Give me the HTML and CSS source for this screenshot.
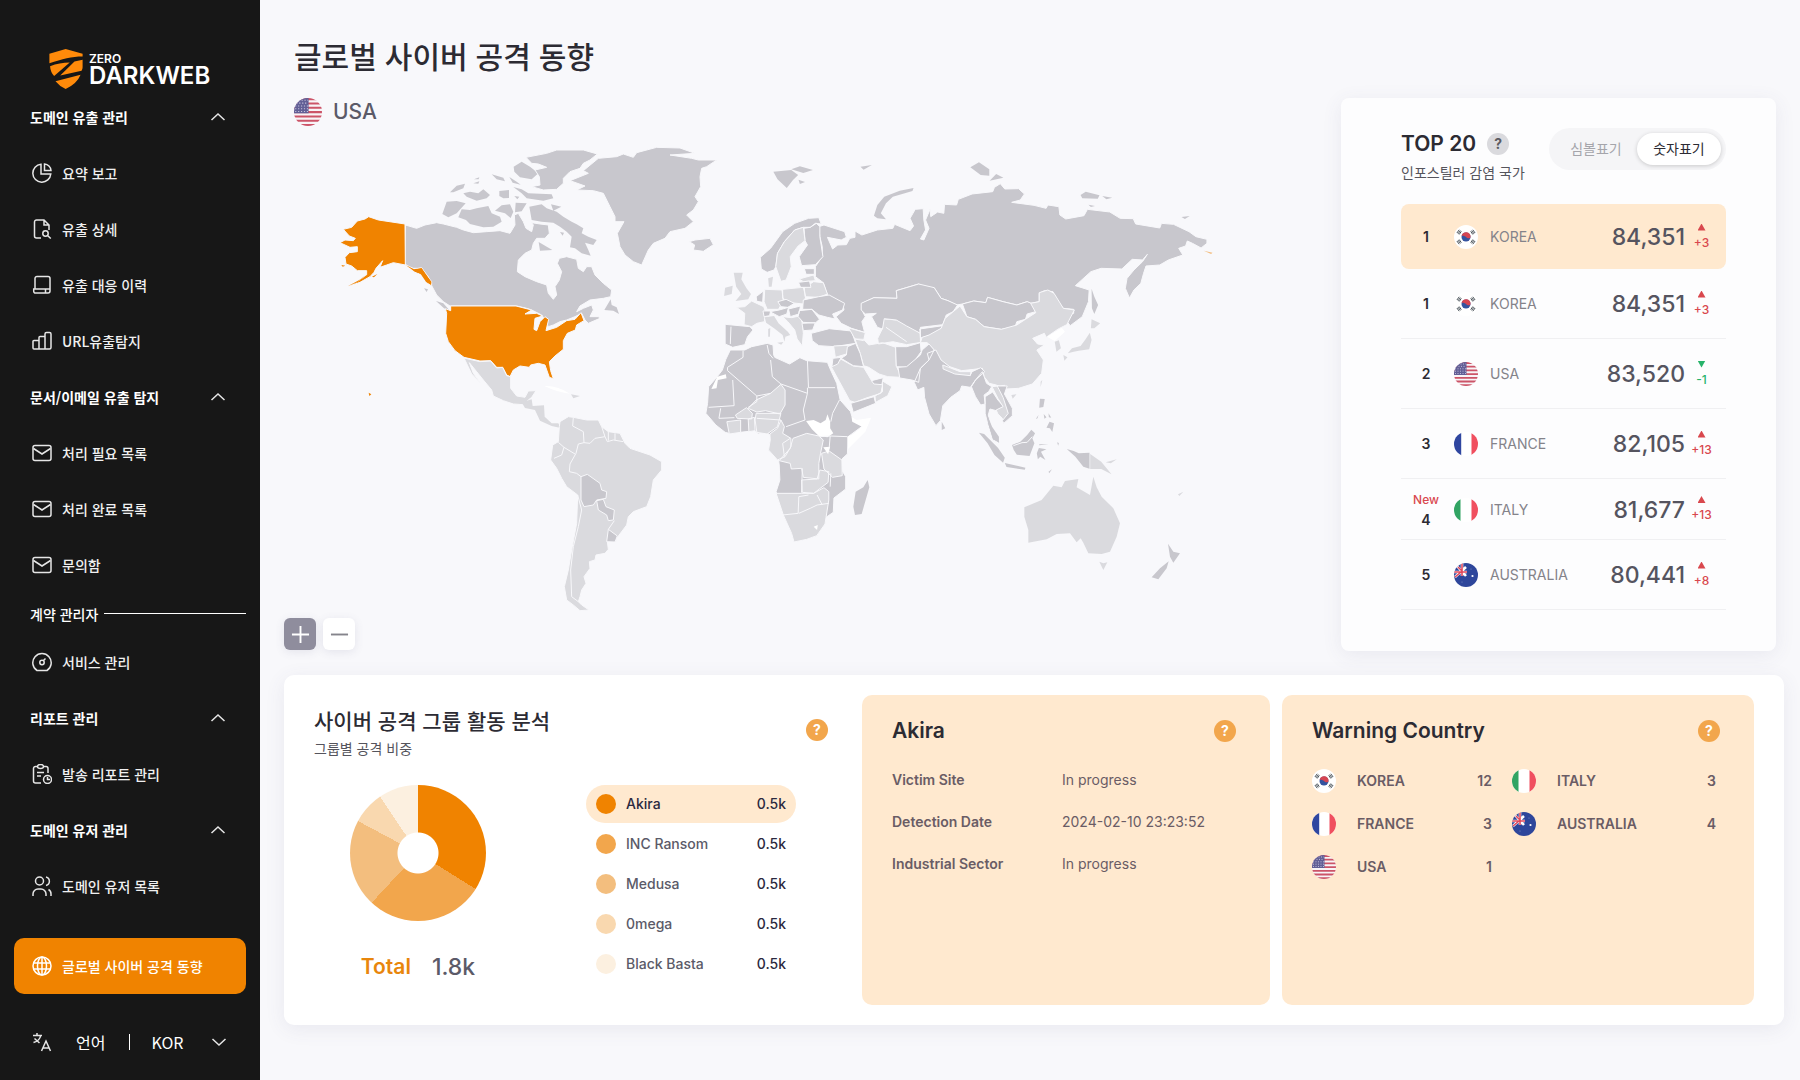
FILE: index.html
```html
<!DOCTYPE html>
<html lang="ko">
<head>
<meta charset="utf-8">
<meta name="viewport" content="width=device-width, initial-scale=1">
<title>글로벌 사이버 공격 동향</title>
<link rel="stylesheet" href="styles.css">
</head>
<body>
<svg class="defs" aria-hidden="true">
  <defs>
    <clipPath id="round"><circle cx="12" cy="12" r="12"/></clipPath>
    <symbol id="up" viewBox="0 0 20 20"><path d="M3.500 13 10 7l6.500 6"/></symbol>
    <symbol id="down" viewBox="0 0 20 20"><path d="M3.500 7 10 13l6.500-6"/></symbol>
    <symbol id="mail" viewBox="0 0 20 20"><rect x="1" y="2.500" width="18" height="15" rx="2"/><path d="M1.500 5.500 10 11l8.500-5.500"/></symbol>
    <symbol id="kr" viewBox="0 0 24 24"><g clip-path="url(#round)"><path fill="#fff" d="M0 0h24v24H0z"/><circle cx="12" cy="12" r="4.500" fill="#34539f"/><path fill="#d64552" d="M7.600 11A4.500 4.500 0 0 1 16.500 12.400C15 14.200 13 13 12 12s-3-1.800-4.400-1z"/><path stroke="#4c555c" stroke-width="1" fill="none" d="M2.900 8 5.200 4.800M4 8.900 6.300 5.600M5.200 9.500 7.300 6.300M18.800 4.800 21.100 8M17.700 5.600 20 8.900M16.700 6.300 18.800 9.500M2.900 16 5.200 19.200M4 15.100 6.300 18.400M5.200 14.500 7.300 17.700M18.800 19.200 21.100 16M17.700 18.400 20 15.100M16.700 17.700 18.800 14.500"/></g></symbol>
    <symbol id="us" viewBox="0 0 24 24"><g clip-path="url(#round)"><path fill="#f8f4f7" d="M0 0h24v24H0z"/><path stroke="#cc5468" stroke-width="1.800" d="M0 1h24M0 4.700h24M0 8.400h24M0 12.100h24M0 15.800h24M0 19.500h24M0 23.200h24"/><path fill="#625f96" d="M0 0h12.500v13H0z"/><path stroke="#c6c3dc" stroke-width=".9" stroke-dasharray="1 1.500" d="M4 2h8M2 4.400h10M1 6.800h11M1 9.200h11M1 11.500h11"/></g></symbol>
    <symbol id="fr" viewBox="0 0 24 24"><g clip-path="url(#round)"><path fill="#fff" d="M0 0h24v24H0z"/><path fill="#2f46a0" d="M0 0h7.200v24H0z"/><path fill="#f04f5f" d="M17.500 0H24v24h-6.500z"/></g></symbol>
    <symbol id="it" viewBox="0 0 24 24"><g clip-path="url(#round)"><path fill="#fff" d="M0 0h24v24H0z"/><path fill="#31a463" d="M0 0h6.500v24H0z"/><path fill="#f04f5f" d="M17.500 0H24v24h-6.500z"/></g></symbol>
    <symbol id="au" viewBox="0 0 24 24"><g clip-path="url(#round)"><path fill="#2e469b" d="M0 0h24v24H0z"/><path stroke="#fff" stroke-width="2.600" d="m2 2 10 11M1 14 12 4M0 9h13M8 0v13"/><path stroke="#e0495d" stroke-width="1.600" d="M0 9h13M8 0v13M1 14l6-5M4 4l4 4"/><circle cx="18.500" cy="13" r="1.100" fill="#fff"/><circle cx="17" cy="6" r=".5" fill="#8d9bcb"/><circle cx="8" cy="19" r=".5" fill="#8d9bcb"/></g></symbol>
  </defs>
</svg>
<div class="app">
  <aside class="side">
    <a class="logo" href="#">
      <svg class="logo-mark" viewBox="0 0 98 118" aria-hidden="true"><path fill="#ff8a0a" d="M0 14 48 0 98 14V22C66 22 38 30 0 42ZM2 51Q30 40 60 40L14 80Q3 68 2 51ZM74 37 98 32V54Q98 60 95 64L32 78ZM18 95 92 76Q82 102 48 118 30 110 18 95Z"/></svg>
      <span class="logo-text"><span class="logo-small">ZERO</span><span class="logo-big">DARKWEB</span></span>
    </a>
    <nav class="nav">
      <button class="group" type="button">도메인 유출 관리<svg><use href="#up"/></svg></button>
      <a class="item" href="#"><svg viewBox="0 0 20 20"><path d="M9 1.200A9 9 0 1 0 18.800 11H9zM12.500 1v6.500H19A7 7 0 0 0 12.500 1z"/></svg>요약 보고</a>
      <a class="item" href="#"><svg viewBox="0 0 20 20"><path d="M9 19H4.500a2 2 0 0 1-2-2V3a2 2 0 0 1 2-2H12l5 5v5M12 1v5h5"/><circle cx="13.500" cy="14.500" r="2.700"/><path d="m15.500 16.500 3.300 3"/></svg>유출 상세</a>
      <a class="item" href="#"><svg viewBox="0 0 20 20"><path d="M3 14V3.500a2 2 0 0 1 2-2h11a2 2 0 0 1 2 2V16a2 2 0 0 1-2 2H3.500A1.800 1.800 0 0 1 1.700 16v-2H18M13.500 14v4"/></svg>유출 대응 이력</a>
      <a class="item" href="#"><svg viewBox="0 0 20 20"><path d="M1 10.500a1 1 0 0 1 1-1h5V18H2a1 1 0 0 1-1-1zM7 6.500a1 1 0 0 1 1-1h5V18H7zM13 3a1.500 1.500 0 0 1 1.500-1.500h3A1.500 1.500 0 0 1 19 3v13.500a1.500 1.500 0 0 1-1.500 1.500H13z"/></svg>URL유출탐지</a>
      <button class="group" type="button">문서/이메일 유출 탐지<svg><use href="#up"/></svg></button>
      <a class="item" href="#"><svg><use href="#mail"/></svg>처리 필요 목록</a>
      <a class="item" href="#"><svg><use href="#mail"/></svg>처리 완료 목록</a>
      <a class="item" href="#"><svg><use href="#mail"/></svg>문의함</a>
      <div class="divider">계약 관리자</div>
      <a class="item" href="#"><svg viewBox="0 0 20 20"><path d="M5 18.500A9.200 9.200 0 1 1 15 18.500zM11.500 8.500 13.500 6.500"/><circle cx="10" cy="10.500" r="2.200"/></svg>서비스 관리</a>
      <button class="group" type="button">리포트 관리<svg><use href="#up"/></svg></button>
      <a class="item" href="#"><svg viewBox="0 0 20 20"><path d="M9 19H3.500a2 2 0 0 1-2-2V4.500a2 2 0 0 1 2-2H5M12 2.500h2a2 2 0 0 1 2 2V9M5.500 2.500C5.500 1 7 .5 8.500.5s3 .5 3 2-1 2-3 2-3-.5-3-2zM5 8.500h7M5 12h4"/><circle cx="15.500" cy="15.500" r="4"/><path d="M15.500 13v2.500H18"/></svg>발송 리포트 관리</a>
      <button class="group" type="button">도메인 유저 관리<svg><use href="#up"/></svg></button>
      <a class="item" href="#"><svg viewBox="0 0 20 20"><circle cx="7.500" cy="5" r="4"/><path d="M1 20v-2a5 5 0 0 1 5-5h3a5 5 0 0 1 5 5v2M14 1c4.500 1 4.500 7.500 0 8.500M16.500 13.500A5 5 0 0 1 19 18v2"/></svg>도메인 유저 목록</a>
      <a class="item active" href="#" aria-current="page"><svg viewBox="0 0 20 20"><circle cx="10" cy="10" r="9"/><ellipse cx="10" cy="10" rx="4.500" ry="9"/><path d="M1.800 7h16.400M1.800 13h16.400M10 1v18"/></svg>글로벌 사이버 공격 동향</a>
    </nav>
    <div class="lang">
      <svg viewBox="0 0 20 20"><path d="M1 3.500h9M5 1v2.500M2.500 6.500 7.500 11M8.500 4C8 7.500 5 9.500 1.500 10.500M9.500 19 14 9l4.500 10M11 16h6"/></svg>
      <label for="lang">언어</label>
      <span class="lang-pick">
        <select id="lang"><option>KOR</option><option>ENG</option></select>
        <svg><use href="#down"/></svg>
      </span>
    </div>
  </aside>

  <main class="main">
    <h1>글로벌 사이버 공격 동향</h1>
    <div class="top">
      <section class="world">
        <h2 class="country"><svg><use href="#us"/></svg>USA</h2>
        <svg class="map" viewBox="284 126 1040 492" role="img" aria-label="세계 지도">
          <g transform="translate(270 20) scale(.33333)">
            <path class="dk" d="M406 615 440 625 465 615 500 608 520 612 560 622 580 630 610 638 650 635 690 632 720 640 735 615 733 585 745 580 760 605 768 625 785 635 790 615 785 608 810 612 835 615 838 640 825 655 800 655 790 670 785 690 765 700 745 720 742 755 765 770 800 785 830 795 835 820 850 838 860 825 855 800 868 780 875 755 862 730 868 715 890 710 920 718 925 745 940 755 950 740 965 740 975 765 1000 790 1025 810 1022 830 1000 835 960 840 930 858 920 875 940 865 965 855 970 870 960 890 985 890 990 895 955 910 945 900 935 880 915 890 890 900 870 905 850 915 835 920 828 905 815 885 785 870 770 865 740 858 540 858 520 845 500 825 485 797 475 770 455 745 430 745 406 735Z"/>
            <path class="dk isle" d="M1003 870 1022 838 1025 855 1040 862 1047 882 1030 872ZM498 843 520 850 541 874 522 865ZM530 545 560 543 587 550 560 580 535 592 517 582ZM565 592 575 568 600 570 620 565 655 558 665 580 690 590 695 605 670 620 640 622 600 612 588 600ZM580 520 600 515 625 520 640 508 660 525 650 535 620 542 590 530ZM540 517 560 497 585 491 580 505 550 517ZM610 490 628 484 625 491ZM612 478 628 472 626 478ZM665 463 700 473 705 484 680 478ZM718 471 740 485 752 494 728 488ZM688 513 717 510 717 534 700 535 688 528ZM730 501 755 508 775 520 845 523 850 535 820 542 770 535 755 520ZM733 528 748 530 742 538ZM731 440 755 425 780 440 805 460 785 478 750 472 733 455ZM695 556 720 553 730 575 722 594 705 580 675 572ZM737 548 770 550 755 574 735 577ZM778 560 815 553 830 565 860 575 880 590 905 605 920 613 940 625 935 640 955 650 980 660 970 675 945 668 955 690 962 707 935 700 915 685 900 682 905 650 890 635 870 620 850 608 815 605 785 600ZM843 553 874 560 850 572ZM806 666 847 690 810 692ZM870 636 882 638 878 647ZM462 805 474 808 470 816Z"/>
            <path class="dk" d="M768 412 830 400 860 390 940 390 982 402 960 420 940 430 930 445 900 455 880 475 880 490 860 508 820 510 785 500 810 495 808 470 795 450 830 442 805 432 785 430Z"/>
            <path class="dk" d="M900 482 955 460 940 452 985 415 1040 410 1060 402 1090 412 1100 398 1160 382 1230 384 1275 400 1200 405 1265 415 1285 420 1340 420 1310 440 1295 445 1290 470 1292 500 1275 530 1285 545 1270 570 1250 585 1270 605 1245 625 1200 635 1185 655 1150 670 1135 690 1115 735 1090 725 1065 705 1050 680 1042 640 1062 605 1035 605 1035 590 1020 560 1000 520 970 512 920 510 945 498ZM1258 665 1275 660 1320 655 1330 674 1300 694 1270 690 1274 675Z"/>
            <path class="us" d="M296 590 325 600 405 612 406 735 370 728 350 735 330 742 338 722 318 745 312 757 300 770 270 787 235 799 262 785 290 764 290 752 262 752 245 738 228 732 225 712 238 698 262 695 262 680 240 682 210 668 225 660 250 662 256 655 238 648 220 628 245 622 262 603 285 597ZM406 733 430 748 455 743 470 765 485 785 485 797 470 788 455 764 435 757Z"/>
            <path class="us isle" d="M306 770 322 762 312 772ZM214 735 226 737 218 740ZM290 764 262 787 233 799 268 780ZM408 736 432 748 455 745 484 786 483 794 468 785 452 762 433 754Z"/>
          </g>
          <g transform="translate(280 280) scale(.33333)">
            <path class="us" d="M512 78H708L755 90 735 102 770 100 788 108 765 115 762 148 770 152 780 125 795 110 806 118 798 152 830 142 860 122 885 118 903 98 912 122 890 135 886 150 862 160 850 182 850 208 825 228 808 245 812 272 820 296 808 292 795 255 775 250 752 255 748 262 720 258 700 270 690 290 680 285 668 262 650 262 632 242 600 243 552 232 525 212 505 185 497 160 500 100 496 86 512 92Z"/>
            <path class="us isle" d="M266 338 274 343 268 348Z"/>
            <path class="lt" d="M552 234 600 245 632 243 650 264 668 262 680 287 692 290 692 325 710 348 735 352 745 333 768 332 755 352 745 360 730 374 700 372 670 362 640 348 635 330 610 300 590 275 568 248 580 280 602 310 575 282Z"/>
            <path class="lt isle" d="M725 367 755 358 758 378 792 376 794 410 815 430 835 430 842 444 815 438 780 422 765 390 735 384ZM873 343 900 348 880 355Z"/>
            <path class="isle" fill="#fff" d="M793 318Q830 315 870 341 835 338 793 318Z"/>
            <path class="lt" d="M840 425 865 410 880 412 920 420 955 420 965 440 985 455 1020 460 1035 490 1050 505 1110 525 1145 545 1145 570 1120 600 1112 650 1100 680 1060 695 1045 710 1040 735 1010 775 1008 785 982 785 985 808 975 820 948 825 945 840 928 845 930 865 912 890 918 910 905 930 900 950 895 965 905 975 927 990 900 992 880 975 860 960 853 920 865 870 875 810 890 730 893 645 860 620 845 595 830 565 812 540 818 495 835 485 838 440Z"/>
            <path class="dk" d="M903 590 922 583 960 610 965 630 980 635 978 655 950 660 940 675 912 680 903 660ZM950 662 970 658 978 680 1003 690 1000 720 985 722 980 705 955 690ZM985 748 1012 768 1005 786 980 785Z"/>
            <path class="bd" d="M880 412 878 438 910 455 912 488 895 492 888 520M912 488 930 490 945 475 975 470 965 440M975 470 982 485 1000 480 1030 485M985 455 985 482M1005 460 1005 480M835 487 852 502 885 522M852 502 845 525 822 535M888 520 870 552 868 575 890 580 903 590M893 645 905 690 895 740 880 800 872 870 875 950 895 965M1003 722 985 748"/>
          </g>
          <g transform="translate(700 120) scale(.34439 .33333)">
            <path class="dk isle" d="M213 155 265 150 285 165 270 180 252 204 225 178ZM265 148 290 139 328 150 300 159ZM286 179 305 186 290 192ZM466 140 499 135 475 149ZM505 287 515 255 535 230 580 212 620 204 617 213 560 230 540 250 525 280 540 298 515 295ZM785 142 810 127 840 148 840 167 815 165ZM841 182 860 162 881 173ZM1105 225 1120 215 1160 226 1155 236 1110 235ZM1168 228 1197 233 1180 238ZM1128 254 1147 258 1135 261ZM1398 291 1422 288 1408 297Z"/>
            <path class="dk" d="M345 320 360 315 420 335 425 352 410 360 370 352 385 387 400 375 425 374 435 355 450 352 450 333 470 345 515 330 560 325 565 313 610 332 620 318 610 295 625 268 648 266 650 300 655 330 640 357 650 360 665 325 655 300 668 268 670 290 690 276 708 280 710 253 745 255 750 238 790 222 850 215 855 202 872 191 885 207 925 206 942 222 930 240 905 247 970 256 1005 265 1010 255 1042 260 1045 285 1062 297 1115 287 1125 268 1190 276 1220 295 1258 296 1265 312 1335 324 1340 310 1375 313 1420 335 1440 350 1472 358 1472 370 1455 384 1430 370 1415 363 1410 378 1390 385 1402 405 1360 420 1335 435 1295 438 1288 460 1280 490 1260 510 1247 534 1235 505 1240 475 1260 450 1285 425 1299 403 1285 420 1255 418 1225 447 1165 445 1135 455 1090 497 1130 510 1128 545 1110 590 1075 617 1062 600 1070 585 1085 580 1085 568 1055 565 1035 540 1025 515 1000 512 985 520 985 545 960 550 950 545 920 555 880 545 835 532 830 548 795 543 762 552 745 555 720 542 700 535 680 503 665 508 635 492 570 512 572 535 505 533 470 550 470 570 480 590 470 605 478 637 440 625 410 610 395 590 418 570 415 550 380 530 370 525 358 488 335 470 335 440 355 410 355 380 348 350Z"/>
            <path class="dk" d="M175 412 205 385 240 335 275 310 315 295 345 293 352 312 335 310 320 322 300 322 275 330 245 365 225 400 220 440 215 450 195 457 178 447ZM302 325 320 322 338 310 348 320 348 350 357 410 335 434 295 437 288 410 312 375 305 362Z"/>
            <path class="lt" d="M220 440 225 400 245 365 275 330 300 322 305 362 285 378 262 410 265 440 250 480 235 484ZM288 477 330 465 335 482 300 485ZM303 503 330 485 358 488 370 522 345 532 305 530ZM240 508 300 502 307 530 300 552 262 548 240 535ZM188 508 238 510 242 542 228 568 195 568 186 545ZM106 562 130 560 150 543 185 560 190 575 187 605 165 610 150 620 128 614 130 580ZM240 590 265 593 290 588 298 612 300 640 297 678 282 657 275 630 255 605Z"/>
            <path class="lt isle" d="M98 458 124 458 120 478 135 505 148 522 140 538 103 543 120 522 105 500ZM73 503 95 497 92 522 70 528ZM198 475 212 470 208 500 200 500ZM188 592 215 588 228 610 255 635 262 645 248 650 245 665 240 645 215 625 192 608ZM224 668 242 666 236 674ZM198 627 204 624 203 650 198 650Z"/>
            <path class="dk" d="M303 446 332 446 332 463 308 463ZM286 487 318 483 322 502 292 502ZM163 530 184 513 182 547 165 544ZM226 545 250 538 274 550 255 562 235 560ZM203 575 230 570 257 562 252 582 230 590ZM257 567 292 558 287 582 262 590ZM288 572 325 568 347 598 335 609 300 607 285 590ZM296 610 335 608 327 630 300 632ZM183 573 205 573 202 587 186 590ZM300 540 345 530 375 525 420 550 414 570 385 582 392 597 370 592 345 585 325 568 298 568ZM73 613 145 620 154 630 138 650 130 674 95 682 73 672ZM323 640 375 626 440 633 452 670 390 680 345 677 326 662Z"/>
            <path class="lt" d="M432 624 480 638 475 662 450 657ZM528 596 570 600 605 615 640 640 642 667 600 674 560 665 518 672 516 655 530 625ZM450 657 475 658 490 675 530 668 568 682 570 738 585 772 545 770 520 762 490 742 475 737 465 700ZM388 678 432 676 425 702 393 712ZM381 740 410 718 445 738 475 742 500 785 530 795 525 820 480 835 450 847 435 842 405 785ZM508 828 530 815 530 783 557 800 545 827 510 847Z"/>
            <path class="dk" d="M468 550 505 533 572 535 570 512 635 492 680 503 700 535 720 542 748 555 735 575 715 585 705 614 640 622 640 640 600 618 570 600 535 596 530 627 515 622 498 590 512 580 480 582 468 570ZM638 627 705 617 690 640 640 654ZM762 552 795 543 830 548 835 532 880 545 920 555 950 545 975 555 975 575 950 582 945 598 920 605 915 620 875 628 825 620 800 598 775 590ZM568 680 600 680 640 668 642 695 625 720 600 742 570 740ZM428 680 452 670 465 700 475 740 445 737 410 715 425 705ZM386 715 410 712 400 732 383 740ZM438 850 505 830 510 850 445 877ZM498 782 532 773 528 794 505 792Z"/>
            <path class="lt" d="M755 558 775 590 800 598 825 620 875 628 920 615 945 598 975 578 960 550 985 545 985 518 1010 510 1028 520 1055 565 1087 570 1065 614 1040 627 1005 652 1000 640 966 655 980 672 1000 675 978 690 997 720 992 760 965 792 925 805 890 807 860 795 840 790 825 770 820 745 795 748 760 752 710 735 690 712 680 690 660 668 640 668 645 652 665 645 700 625 712 595Z"/>
            <path class="lt isle" d="M1030 665 1042 661 1048 685 1035 695ZM1137 598 1162 610 1145 625 1135 625ZM1132 638 1137 660 1130 688 1100 692 1085 695 1068 700 1080 685 1105 678 1118 660ZM1055 705 1067 712 1058 722ZM904 825 919 823 908 836ZM989 785 994 780 989 801Z"/>
            <path class="isle" fill="#fff" d="M1008 650 1050 623 1060 635 1030 663Z"/>
            <path class="dk" d="M575 742 600 740 640 705 645 690 665 672 680 690 665 720 640 745 635 787 615 780 580 774ZM640 745 665 720 660 700 685 690 700 720 740 752 785 765 790 755 815 743 827 755 800 780 785 802 760 798 755 812 728 832 705 857 698 902 685 917 665 882 652 832 650 802 632 810 622 787ZM788 800 800 780 820 755 832 790 847 800 838 815 825 825 828 852 815 855 800 830ZM828 830 850 816 865 840 882 860 860 872 842 867 837 885 847 920 870 968 850 960 835 910 828 880Z"/>
            <path class="dk isle" d="M702 905 712 925 702 930ZM834 885 848 920 868 950 868 968 850 956 838 915ZM1137 506 1145 530 1156 555 1145 582 1138 565ZM987 836 1001 837 997 861 985 863ZM1015 905 1028 910 1023 936 1016 925 1006 923ZM998 882 1006 892 1000 896ZM1012 880 1020 893 1013 892ZM975 897 983 885 980 895ZM810 938 825 942 865 983 885 1013 880 1028 855 1005 835 970ZM885 1029 945 1043 943 1049 890 1041ZM906 975 930 965 950 945 962 929 973 940 965 955 971 970 957 1008 920 1004 911 990ZM978 1000 984 984 1006 988 990 995 1003 1020 988 1010 981 1018ZM1065 987 1085 993 1100 1000 1131 998 1131 1046 1113 1040 1090 1010ZM1037 967 1042 969 1040 977ZM985 973 1012 973 985 976ZM1012 1055 1022 1048 1014 1060Z"/>
            <path class="bd" d="M910 977 935 968 950 967 965 950"/>
            <path class="lt" d="M705 735 755 755 787 755 785 767 740 762 706 747ZM848 800 885 796 880 825 905 870 905 890 882 910 878 895 865 882 860 870 880 860 865 835Z"/>
            <path class="lt isle" d="M1133 1002 1165 1025 1195 1063 1165 1047 1133 1047ZM1178 1027 1210 1018 1193 1030Z"/>
            <path class="dk" d="M863 798 892 798 884 822 907 865 907 887 882 910 878 902 895 880 880 832Z"/>
            <path class="dk" d="M88 690 130 690 150 680 195 670 212 675 214 705 217 712 260 732 290 713 310 722 370 727 377 745 397 790 407 840 437 875 442 892 472 918 430 950 428 1002 412 1017 412 1050 423 1070 423 1107 389 1134 387 1177 366 1192 363 1210 339 1247 310 1258 273 1266 266 1240 242 1185 221 1115 232 1080 230 1035 228 1020 199 990 204 960 203 944 189 937 169 942 160 932 116 937 92 942 73 937 46 915 17 880 22 850 25 800 50 770 65 750 75 718Z"/>
            <path class="lt" d="M163 840 205 820 235 793 247 810 247 855 232 882 190 872 165 876 140 865ZM163 880 235 880 225 920 195 942 165 937 160 900ZM78 905 118 900 118 937 85 942ZM103 885 135 863 152 880 150 897 108 895ZM140 897 158 892 160 932 142 935ZM235 900 245 920 240 940 264 955 264 980 247 1010 225 1020 199 990 204 960 203 942 225 925ZM270 955 310 940 345 948 358 960 350 1000 345 1030 345 1077 300 1072 295 1045 265 1047 262 1030 230 1022 262 985ZM353 1000 375 993 412 1020 413 1067 385 1072 360 1047ZM295 1080 340 1077 348 1050 374 1055 372 1087 330 1120 297 1117ZM221 1120 295 1120 330 1120 360 1103 374 1115 374 1140 366 1192 363 1212 339 1247 310 1258 273 1266 266 1240 242 1185Z"/>
            <path class="isle" fill="#fff" d="M308 903 330 900 350 910 365 900 370 883 378 905 378 925 387 940 370 952 345 948 325 928ZM440 890 455 900 497 893 480 935 430 987 428 950 445 942 470 920 442 905ZM33 807 50 770 75 763 77 775 52 780 48 805ZM358 982 378 980 372 1003ZM330 1220 342 1215 340 1230Z"/>
            <path class="bd" d="M125 692V712L80 742 80 752 165 828 205 820M95 780 99 857 25 862M165 828 165 845 140 862M205 720 210 770 235 792 312 820M312 722 315 803 392 803M312 803V820L300 870 305 900 250 920M405 840 385 880 380 905M378 948 428 950M195 675 200 700 212 715M55 895 100 893M60 865 55 895M348 950 378 948 375 985M90 620 88 672M540 622 600 665M262 955 240 970 245 1010M297 1045 295 1118M315 1125 287 1130 285 1180 240 1185M287 1180 320 1165 340 1155 374 1150M340 1125 355 1155M235 900 165 895M640 640 640 665M380 1060 378 1100"/>
            <path class="us isle" d="M1463 392 1488 398 1484 402Z" opacity=".5"/>
          </g>
          <g transform="translate(690 400) scale(.33333)">
            <path class="dk isle" d="M533 240 538 262 515 342 495 345 490 320 497 275 520 262ZM1434 431 1450 455 1470 460 1450 488 1440 470ZM1436 484 1430 505 1405 538 1385 532 1410 505Z"/>
            <path class="lt isle" d="M1003 322 1055 300 1090 257 1115 262 1125 243 1165 237 1160 262 1200 285 1210 230 1220 262 1235 290 1270 325 1290 370 1280 410 1260 455 1235 462 1195 460 1180 428 1172 415 1160 427 1140 400 1100 402 1070 418 1015 428 1015 390 1003 350ZM1228 485 1240 490 1252 487 1240 510ZM1464 283 1480 275 1468 288Z"/>
          </g>
        </svg>
        <div class="zoom">
          <button class="zoom-in" type="button" aria-label="확대"><svg viewBox="0 0 20 20"><path d="M10 1v18M1 10h18"/></svg></button>
          <button class="zoom-out" type="button" aria-label="축소"><svg viewBox="0 0 20 20"><path d="M1 10h18"/></svg></button>
        </div>
      </section>

      <section class="rank">
        <header class="rank-head">
          <div class="rank-title">
            <h2 class="title">TOP 20 <button class="help grey" type="button">?</button></h2>
            <p class="sub">인포스틸러 감염 국가</p>
          </div>
          <div class="toggle">
            <button type="button" aria-pressed="false">심볼표기</button>
            <button type="button" aria-pressed="true">숫자표기</button>
          </div>
        </header>
        <table class="rank-table">
          <tbody>
            <tr class="mine"><td>1</td><td><svg><use href="#kr"/></svg></td><td>KOREA</td><td>84,351</td><td class="rise"><i></i>+3</td></tr>
            <tr><td>1</td><td><svg><use href="#kr"/></svg></td><td>KOREA</td><td>84,351</td><td class="rise"><i></i>+3</td></tr>
            <tr><td>2</td><td><svg><use href="#us"/></svg></td><td>USA</td><td>83,520</td><td class="fall"><i></i>-1</td></tr>
            <tr><td>3</td><td><svg><use href="#fr"/></svg></td><td>FRANCE</td><td>82,105</td><td class="rise"><i></i>+13</td></tr>
            <tr class="short"><td><span class="new">New</span>4</td><td><svg><use href="#it"/></svg></td><td>ITALY</td><td>81,677</td><td class="rise"><i></i>+13</td></tr>
            <tr><td>5</td><td><svg><use href="#au"/></svg></td><td>AUSTRALIA</td><td>80,441</td><td class="rise"><i></i>+8</td></tr>
          </tbody>
        </table>
      </section>
    </div>

    <div class="bottom">
      <section class="groups">
        <header class="head">
          <div>
            <h2 class="title">사이버 공격 그룹 활동 분석</h2>
            <p class="sub">그룹별 공격 비중</p>
          </div>
          <button class="help" type="button">?</button>
        </header>
        <div class="share">
          <div class="chart">
            <div class="pie" role="img" aria-label="그룹별 공격 비중"></div>
            <p class="total"><b>Total</b><span>1.8k</span></p>
          </div>
          <ul class="legend">
            <li class="on"><i class="c1"></i>Akira<b>0.5k</b></li>
            <li><i class="c2"></i>INC Ransom<b>0.5k</b></li>
            <li><i class="c3"></i>Medusa<b>0.5k</b></li>
            <li><i class="c4"></i>0mega<b>0.5k</b></li>
            <li><i class="c5"></i>Black Basta<b>0.5k</b></li>
          </ul>
        </div>
      </section>
      <section class="card">
        <header class="head"><h2 class="title">Akira</h2><button class="help" type="button">?</button></header>
        <dl class="facts">
          <dt>Victim Site</dt><dd>In progress</dd>
          <dt>Detection Date</dt><dd>2024-02-10 23:23:52</dd>
          <dt>Industrial Sector</dt><dd>In progress</dd>
        </dl>
      </section>
      <section class="card">
        <header class="head"><h2 class="title">Warning Country</h2><button class="help" type="button">?</button></header>
        <ul class="warn">
          <li><svg><use href="#kr"/></svg>KOREA<b>12</b></li>
          <li><svg><use href="#it"/></svg>ITALY<b>3</b></li>
          <li><svg><use href="#fr"/></svg>FRANCE<b>3</b></li>
          <li><svg><use href="#au"/></svg>AUSTRALIA<b>4</b></li>
          <li><svg><use href="#us"/></svg>USA<b>1</b></li>
        </ul>
      </section>
    </div>
  </main>
</div>
</body>
</html>
```
FILE: styles.css
```css
* { box-sizing: border-box; }
body {
  margin: 0;
  background: #f8f8fb;
  color: #2c2b33;
  font: 14px/20px Inter, "Noto Sans CJK KR", sans-serif;
}
h1, h2, p, ul, dl, dd { margin: 0; padding: 0; font-weight: inherit; }
ul { list-style: none; }
a { color: inherit; text-decoration: none; }
button, select { border: 0; padding: 0; background: none; color: inherit; font: inherit; cursor: pointer; }
.defs { position: absolute; width: 0; height: 0; }
.app { display: grid; grid-template-columns: 260px 1fr; min-height: 100vh; }

/* Sidebar */
.side {
  background: #171717;
  color: #fff;
  padding: 49px 14px 10px;
  font-family: "Noto Sans CJK KR", sans-serif;
}
.side svg { width: 20px; height: 20px; fill: none; stroke: #e6e6e6; stroke-width: 1.5; flex: none; }
.logo { display: flex; gap: 6px; height: 40px; padding-left: 35px; }
.side .logo-mark { width: 34px; height: 40px; stroke: none; }
.logo-text { display: flex; flex-direction: column; padding-top: 4px; font-family: Inter, sans-serif; font-weight: 600; }
.logo-small { font-size: 12px; line-height: 12px; }
.logo-big { font-size: 24px; line-height: 22px; }
.nav { display: flex; flex-direction: column; }
.group, .item { display: flex; align-items: center; height: 56px; }
.group { justify-content: space-between; padding: 0 18px 0 16px; font-weight: 600; }
.item { gap: 10px; padding: 0 18px; font-weight: 500; color: #f0f0f0; }
.item.active { margin-top: 24px; border-radius: 10px; background: #f08300; color: #fff; }
.item.active svg { stroke: #fff; }
.divider { display: flex; align-items: center; gap: 6px; height: 41px; padding-left: 16px; font-weight: 500; }
.divider::after { content: ""; flex: 1; height: 1px; background: #fff; }
.lang { display: flex; align-items: center; height: 56px; margin-top: 20px; padding: 0 17px 0 18px; font-size: 16px; }
.lang label { padding: 0 24px; }
.lang-pick { flex: 1; display: grid; align-items: center; position: relative; }
.lang-pick::before { content: ""; position: absolute; left: 0; width: 1px; height: 16px; background: #fff; }
.lang-pick select { grid-area: 1 / 1; padding-left: 22px; appearance: none; }
.lang-pick svg { grid-area: 1 / 1; justify-self: end; pointer-events: none; }

/* Main */
.main { padding: 33px 16px 55px 24px; }
h1 { padding-left: 10px; font-size: 30px; line-height: 48px; font-weight: 500; }
.top { display: grid; grid-template-columns: 1fr 435px; gap: 17px; margin: 17px 8px 24px 0; }
.world { display: flex; flex-direction: column; }
.country { display: flex; align-items: center; gap: 11px; height: 28px; padding-left: 10px; font-size: 21px; font-weight: 500; color: #5b5a68; }
.country svg { width: 28px; height: 28px; }
.map { display: block; width: 100%; }
.map path { stroke: #f8f8fb; stroke-width: 1; vector-effect: non-scaling-stroke; stroke-linejoin: round; }
.map .isle { stroke: none; }
.map .dk { fill: #c8c7cd; }
.map .lt { fill: #dadade; }
.map .us { fill: #f08300; }
.map .bd { fill: none; }
.zoom { display: flex; gap: 7px; padding-bottom: 1px; }
.zoom button { display: grid; place-items: center; width: 32px; height: 32px; border-radius: 6px; box-shadow: 0 2px 10px #5050781f; }
.zoom svg { width: 19px; height: 19px; fill: none; stroke-width: 2; }
.zoom-in { background: #8f8d9d; stroke: #fff; }
.zoom-out { background: #fff; stroke: #85848c; }

.rank { padding: 30px 50px 0 60px; border-radius: 8px; background: #fdfdfe; box-shadow: 0 4px 20px #50507817; }
.rank-head { display: flex; justify-content: space-between; height: 76px; }
.rank-title { padding-top: 1px; }
.title { display: flex; align-items: center; gap: 11px; font-size: 21px; line-height: 30px; font-weight: 600; }
.sub { line-height: 28px; color: #55545c; }
.help { width: 22px; height: 22px; border-radius: 50%; background: #f2a64c; color: #fff; font-size: 14px; line-height: 22px; font-weight: 700; text-align: center; }
.help.grey { background: #dadade; color: #5b5a62; }
.toggle { display: flex; align-items: center; height: 42px; padding: 0 5px 0 6px; border-radius: 21px; background: #f5f5f7; }
.toggle button { width: 82px; height: 32px; border-radius: 16px; color: #a5a5ab; }
.toggle [aria-pressed="true"] { width: 84px; background: #fff; color: #2c2b33; box-shadow: 0 1px 4px #0000002e; }
.rank-table { width: 100%; border-collapse: separate; border-spacing: 0; table-layout: fixed; }
.rank-table td { height: 70px; padding: 1px 0 0; border-bottom: 1px solid #f0f0f2; }
.rank-table .mine td { height: 65px; border: 0; background: #ffe9cf; }
.rank-table .short td { height: 61px; }
.mine td:first-child { border-radius: 8px 0 0 8px; }
.mine td:last-child { border-radius: 0 8px 8px 0; }
.rank-table td:nth-child(1) { width: 50px; text-align: center; font-weight: 600; }
.rank-table td:nth-child(2) { width: 39px; padding-left: 3px; }
.rank-table td:nth-child(3) { color: #84838a; }
.rank-table td:nth-child(4) { text-align: right; font-size: 23px; font-weight: 500; color: #55545f; }
.rank-table td:nth-child(5) { width: 41px; padding-right: 8px; text-align: center; font-size: 12px; line-height: 16px; font-weight: 500; }
.rank-table svg { display: block; width: 24px; height: 24px; }
.rank-table i { display: block; width: 8px; height: 7px; margin: 0 auto 4px; background: currentColor; }
.rise { color: #d9484e; }
.rise i { clip-path: polygon(50% 0, 100% 100%, 0 100%); }
.fall { color: #27b36a; }
.fall i { clip-path: polygon(0 0, 100% 0, 50% 100%); }
.new { display: block; font-size: 12px; font-weight: 500; color: #d9484e; }

/* Bottom panel */
.bottom {
  display: grid;
  grid-template-columns: 536fr 408fr 472fr;
  gap: 12px;
  min-height: 350px;
  padding: 20px 30px;
  border-radius: 10px;
  background: #fff;
  box-shadow: 0 4px 20px #50507817;
}
.head { display: flex; justify-content: space-between; align-items: center; }
.groups { padding: 10px 22px 0 0; }
.groups .title { font-family: "Noto Sans CJK KR", sans-serif; font-weight: 500; }
.groups .help { margin-bottom: 8px; }
.share { display: flex; justify-content: space-between; padding: 22px 32px 0 36px; }
.chart { display: flex; flex-direction: column; align-items: center; gap: 31px; }
.pie {
  width: 136px;
  height: 136px;
  border-radius: 50%;
  background: radial-gradient(circle, #fff 20px, #fff0 21px),
    conic-gradient(#f08300 0 122deg, #f2a64c 0 223deg, #f3be7e 0 298deg, #f9d8af 0 326deg, #fcf0e0 0);
}
.total { display: flex; gap: 21px; font-size: 23px; line-height: 30px; font-weight: 500; color: #5b5a68; }
.total b { font-size: 21px; font-weight: 600; color: #e8860c; }
.legend { display: flex; flex-direction: column; gap: 2px; width: 210px; }
.legend li { display: flex; align-items: center; gap: 10px; height: 38px; padding: 0 10px; border-radius: 19px; color: #5b5a68; font-weight: 500; }
.legend b { margin-left: auto; font-weight: 500; color: #2b2940; }
.legend i { width: 20px; height: 20px; border-radius: 50%; }
.legend .on { background: #ffe9cf; color: #2b2940; }
.c1 { background: #f08300; }
.c2 { background: #f2a64c; }
.c3 { background: #f3be7e; }
.c4 { background: #f9d8af; }
.c5 { background: #fcf0e0; }
.card { padding: 21px 34px 20px 30px; border-radius: 10px; background: #ffe9cf; }
.facts { display: grid; grid-template-columns: 170px 1fr; row-gap: 22px; padding-top: 24px; color: #6a5c65; }
.facts dt { font-weight: 600; }
.warn { display: grid; grid-template-columns: 180fr 204fr; gap: 19px 20px; padding: 23px 4px 0 0; color: #6a5c65; font-weight: 600; }
.warn li { display: flex; align-items: center; }
.warn svg { width: 24px; height: 24px; margin-right: 21px; }
.warn b { margin-left: auto; font-weight: 600; }
```
